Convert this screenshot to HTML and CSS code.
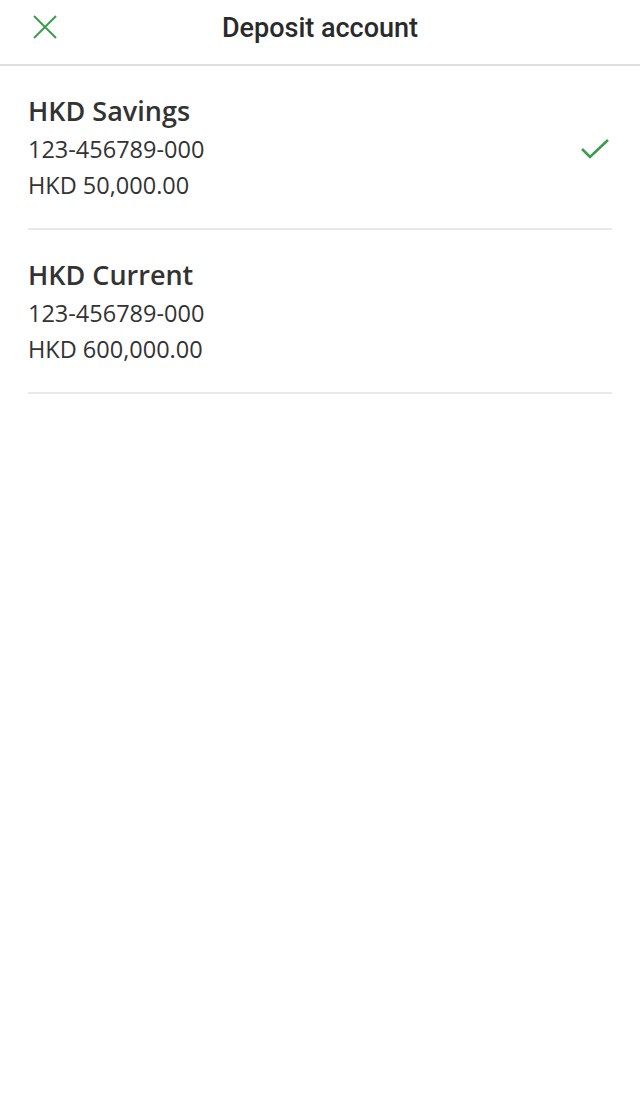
FILE: index.html
```html
<!DOCTYPE html>
<html lang="en">
<head>
    <meta charset="UTF-8">
    <meta name="viewport" content="width=device-width, initial-scale=1.0">
    <title>Deposit account</title>
    <link rel="stylesheet" href="styles.css">
</head>
<body>
    <div class="header">
        <button class="close-btn" aria-label="Close">
            <svg width="24" height="24" viewBox="0 0 24 24">
                <path d="M1 1 L23 23 M23 1 L1 23" stroke="#3c9c4c" stroke-width="2" fill="none"/>
            </svg>
        </button>
        <h1>Deposit account</h1>
    </div>

    <div class="account-list">
        <div class="account selected">
            <div class="account-info">
                <div class="account-name">HKD Savings</div>
                <div class="account-line">123-456789-000</div>
                <div class="account-line">HKD 50,000.00</div>
            </div>
            <svg class="check" width="30" height="22" viewBox="0 0 30 22">
                <path d="M2 11 L10 19 L28 2" stroke="#3c9c4c" stroke-width="2.6" fill="none"/>
            </svg>
        </div>
        <div class="account">
            <div class="account-info">
                <div class="account-name">HKD Current</div>
                <div class="account-line">123-456789-000</div>
                <div class="account-line">HKD 600,000.00</div>
            </div>
        </div>
    </div>
</body>
</html>
```

FILE: styles.css
```css
* {
    margin: 0;
    padding: 0;
    box-sizing: border-box;
}

body {
    font-family: "Open Sans", Arial, sans-serif;
    background-color: white;
    color: #333;
}

.header {
    position: relative;
    height: 66px;
    display: flex;
    align-items: center;
    justify-content: center;
    border-bottom: 2px solid #dedede;
}

.header h1 {
    font-family: Roboto, Arial, sans-serif;
    font-size: 27px;
    font-weight: 500;
    color: #2a2a2a;
    margin-top: -8px;
}

.close-btn {
    position: absolute;
    left: 33px;
    top: 15px;
    width: 24px;
    height: 24px;
    border: none;
    background: none;
    cursor: pointer;
}

.close-btn svg {
    display: block;
}

.account-list {
    padding: 0 28px;
}

.account {
    display: flex;
    align-items: center;
    justify-content: space-between;
    padding: 25px 0 25px;
    border-bottom: 2px solid #e8e8e8;
}

.account-name {
    font-size: 27px;
    font-weight: 600;
    line-height: 40px;
    color: #333;
}

.account-line {
    font-size: 23.5px;
    line-height: 36px;
    color: #333;
}

.check {
    display: block;
    margin-right: 2px;
    margin-top: 3px;
}
```
